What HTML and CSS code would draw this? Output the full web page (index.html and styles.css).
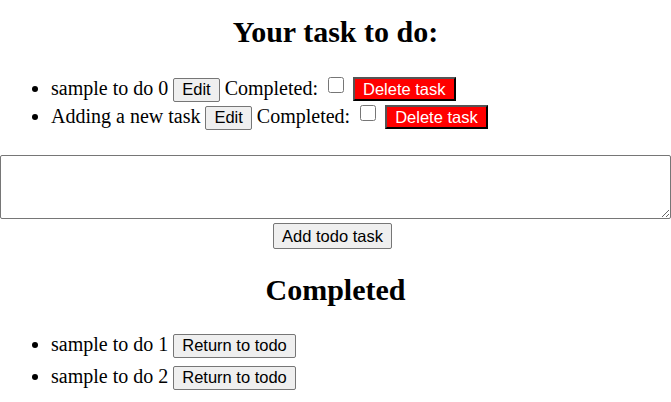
FILE: index.html
```html
<!DOCTYPE html>
<html>
<head>
<meta charset="utf-8">
<link rel="stylesheet" href="styles.css">
</head>
<body>
<div class="app">
  <h2 class="title">Your task to do:</h2>
  <ul class="list">
    <li class="item">sample to do 0 <button class="btn">Edit</button> Completed: <input type="checkbox" class="check"> <button class="btn btn-del">Delete task</button></li>
    <li class="item">Adding a new task <button class="btn">Edit</button> Completed: <input type="checkbox" class="check"> <button class="btn btn-del">Delete task</button></li>
  </ul>
  <div class="form">
    <textarea class="input"></textarea>
    <button class="btn btn-add">Add todo task</button>
  </div>
  <h2 class="title title-done">Completed</h2>
  <ul class="list list-done">
    <li class="item">sample to do 1 <button class="btn">Return to todo</button></li>
    <li class="item">sample to do 2 <button class="btn">Return to todo</button></li>
  </ul>
</div>
</body>
</html>
```
FILE: styles.css
```css
html, body {
  margin: 0;
  padding: 0;
  background: #fff;
}
body {
  font-family: "Liberation Serif", "Times New Roman", serif;
  font-size: 20px;
  color: #000;
}
.title {
  font-size: 30px;
  font-weight: bold;
  text-align: center;
  margin: 14px 0 0;
  line-height: 36px;
}
.list {
  margin: 24px 0 0;
  padding-left: 51px;
}
.item {
  line-height: 28px;
}
.btn {
  font-family: "Liberation Sans", Arial, sans-serif;
  font-size: 16.5px;
  background: #efefef;
  border: 1px solid #767676;
  border-radius: 2px;
  padding: 1px 8px;
  color: #000;
  height: 24px;
  vertical-align: baseline;
}
.btn-del {
  background: #ff0000;
  color: #fff;
  border: 2px outset #767676;
  border-color: #555 #333 #333 #555;
  border-radius: 0;
}
.check {
  width: 16px;
  height: 16px;
  margin: 0 4px 0 5px;
  vertical-align: 2px;
}
.form {
  margin-top: 25px;
  text-align: center;
}
.input {
  display: block;
  box-sizing: border-box;
  width: 100%;
  height: 64px;
  margin: 0;
  border: 1px solid #767676;
  border-radius: 2px;
  resize: vertical;
}
.btn-add {
  margin-top: 4px;
  height: 26px;
  margin-right: 6px;
}
.title-done {
  margin-top: 23px;
}
.list-done {
  margin-top: 20px;
}
.list-done .item {
  line-height: 32px;
}
```
